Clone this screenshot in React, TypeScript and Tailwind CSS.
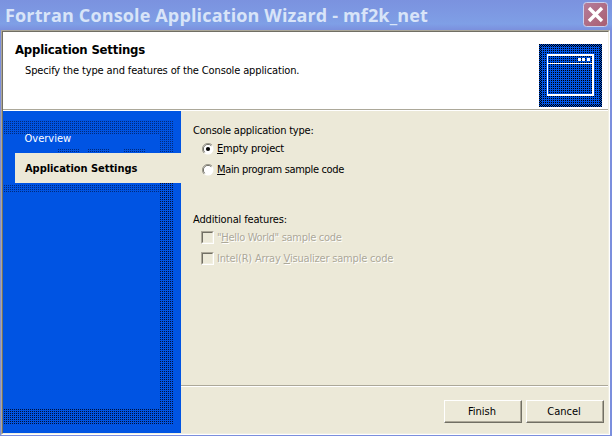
import type { ReactNode } from 'react';

const tahoma = "font-['DejaVu_Sans_Condensed','DejaVu_Sans',sans-serif] [font-stretch:condensed]";

function WizardIcon() {
  return (
    <svg width="63" height="63" shapeRendering="crispEdges" className="block">
      <defs>
        <pattern id="checker" width="2" height="2" patternUnits="userSpaceOnUse">
          <rect width="2" height="2" fill="#0054e3" />
          <rect x="0" y="0" width="1" height="1" fill="#000" />
          <rect x="1" y="1" width="1" height="1" fill="#000" />
        </pattern>
        <pattern id="iconDots" width="2" height="2" patternUnits="userSpaceOnUse">
          <rect x="0" y="0" width="1" height="1" fill="#000" />
        </pattern>
      </defs>
      <rect width="63" height="63" fill="url(#checker)" />
      <rect x="3" y="3" width="57" height="57" fill="#0054e3" />
      <rect x="3" y="3" width="57" height="57" fill="url(#iconDots)" />
      <path fill="#fff" d="M8 10H55V52H8ZM9 12V19H53V12ZM9 20V50H53V20Z" fillRule="evenodd" />
      <path fill="#fff" d="M39 14h3v3h-3zM43 14h3v3h-3zM48 14h3v3h-3z" />
    </svg>
  );
}

function SidebarTexture() {
  return (
    <svg width="178" height="322" shapeRendering="crispEdges" className="block">
      <defs>
        <pattern id="dots" width="2" height="2" patternUnits="userSpaceOnUse">
          <rect x="1" y="0" width="1" height="1" fill="#00103a" />
        </pattern>
        <pattern id="softDots" width="2" height="2" patternUnits="userSpaceOnUse">
          <rect x="1" y="0" width="1" height="1" fill="#002a7c" />
        </pattern>
      </defs>
      <path fill="url(#softDots)" d="M0 10H170V42H157V23H0ZM55 38H76V42H55ZM85 38H106V42H85ZM121 38H142V42H121ZM0 74H157V81H0Z" />
      <path fill="url(#dots)" d="M157 72H170V313H0V298H157Z" />
    </svg>
  );
}

function Radio({ checked, children }: { checked?: boolean; children: ReactNode }) {
  return (
    <label className="flex h-[21px] items-center">
      <svg width="12" height="12" className="mr-[3px] block">
        <circle cx="6" cy="6" r="5.5" fill="#fff" />
        <path d="M2 10A5.5 5.5 0 0 1 10 2" fill="none" stroke="#9d9b8e" />
        <path d="M2.7 9.3A4.6 4.6 0 0 1 9.3 2.7" fill="none" stroke="#6b6960" />
        {checked && <circle cx="6" cy="6" r="2.1" fill="#000" />}
      </svg>
      <span className="whitespace-nowrap">{children}</span>
    </label>
  );
}

function Check({ children }: { children: ReactNode }) {
  return (
    <label className="flex h-[21px] items-center text-[#aca899] [text-shadow:1px_1px_0_#fff]">
      <span className="mr-[3px] h-[13px] w-[13px] border border-t-[#aca899] border-l-[#aca899] border-r-white border-b-white">
        <span className="block h-[11px] w-[11px] border border-t-[#716f64] border-l-[#716f64] border-r-[#f1efe2] border-b-[#f1efe2]" />
      </span>
      <span className="whitespace-nowrap">{children}</span>
    </label>
  );
}

function Button({ children }: { children: ReactNode }) {
  return (
    <button className="h-[23px] w-[78px] border border-t-white border-l-white border-r-[#716f64] border-b-[#716f64] pr-[2px] shadow-[inset_-1px_-1px_0_#aca899]">
      {children}
    </button>
  );
}

const Key = ({ children }: { children: ReactNode }) => (
  <span className="underline decoration-1 underline-offset-[1px]">{children}</span>
);

export default function App() {
  return (
    <div className={`flex h-[436px] w-[612px] flex-col overflow-hidden bg-[#7b8edd] text-[11px] leading-[13px] text-black ${tahoma}`}>
      <header className="flex h-[30px] shrink-0 items-center bg-linear-to-b from-[#7b92df] from-0% via-[#7f9fe6] via-80% to-[#7b90dd] to-100% pl-[5px]">
        <h1 className="flex-1 font-['Open_Sans',sans-serif] text-[18px] leading-[30px] font-bold tracking-[0.15px] whitespace-nowrap text-[#d8e4f8] [font-stretch:normal]">
          Fortran Console Application Wizard - mf2k_net
        </h1>
        <svg width="25" height="26" className="mr-[4px] block">
          <defs>
            <linearGradient id="close" x2="1" y2="1">
              <stop stopColor="#b57d9b" />
              <stop offset="1" stopColor="#a95e70" />
            </linearGradient>
          </defs>
          <rect x=".5" y=".5" width="24" height="24" rx="3" fill="url(#close)" stroke="#c9d0ee" />
          <path d="M6 6L19 19M19 6L6 19" stroke="#fff" strokeWidth="3.4" />
        </svg>
      </header>
      <div className="mr-[2px] ml-px flex h-[405px] flex-col border-t border-r border-b border-l border-t-[#aca899] border-r-white border-b-white border-l-[#aca899]">
        <div className="flex h-[403px] flex-col border border-t-[#716f64] border-r-[#f1efe2] border-b-[#f1efe2] border-l-[#716f64]">
          <section className="flex h-[77px] shrink-0 justify-between bg-white pt-[12px] pr-[6px] pl-[12px]">
            <div className="-mt-[2px]">
              <h2 className="text-[13px] leading-[15px] font-bold tracking-[-0.19px] whitespace-nowrap">Application Settings</h2>
              <p className="mt-[7px] ml-[10px] tracking-[-0.13px] whitespace-nowrap">Specify the type and features of the Console application.</p>
            </div>
            <WizardIcon />
          </section>
          <div className="h-[2px] shrink-0 border-t border-b border-t-[#aca899] border-b-white" />
          <main className="flex h-[322px]">
            <nav className="grid w-[178px] shrink-0 bg-[#0054e3]">
              <div className="col-start-1 row-start-1"><SidebarTexture /></div>
              <div className="col-start-1 row-start-1 pt-[21px]">
                <div className="pl-[21.5px] text-white">Overview</div>
                <div className="mt-[8px] ml-[12px] flex h-[30px] items-center bg-[#ece9d8] pl-[10px] font-bold tracking-[-0.05px] whitespace-nowrap">Application Settings</div>
              </div>
            </nav>
            <div className="flex flex-1 flex-col bg-[#ece9d8]">
              <div className="h-[274px] pt-[13px] pl-[12px]">
                <div className="tracking-[-0.2px]">Console application type:</div>
                <div className="pt-px pl-[9px]">
                  <div className="tracking-[-0.18px]">
                    <Radio checked><Key>E</Key>mpty project</Radio>
                  </div>
                  <div className="tracking-[-0.34px]">
                    <Radio><Key>M</Key>ain program sample code</Radio>
                  </div>
                </div>
                <div className="mt-[33px] mb-px tracking-[-0.15px]">Additional features:</div>
                <div className="pl-[8px]">
                  <div className="tracking-[-0.29px]">
                    <Check>"<Key>H</Key>ello World" sample code</Check>
                  </div>
                  <div className="tracking-[-0.19px]">
                    <Check>Intel(R) Array <Key>V</Key>isualizer sample code</Check>
                  </div>
                </div>
              </div>
              <div className="h-[2px] border-t border-b border-t-[#aca899] border-b-white" />
              <div className="flex justify-end gap-[4px] pt-[13px] pr-[4px]">
                <Button>Finish</Button>
                <Button>Cancel</Button>
              </div>
            </div>
          </main>
        </div>
      </div>
    </div>
  );
}
